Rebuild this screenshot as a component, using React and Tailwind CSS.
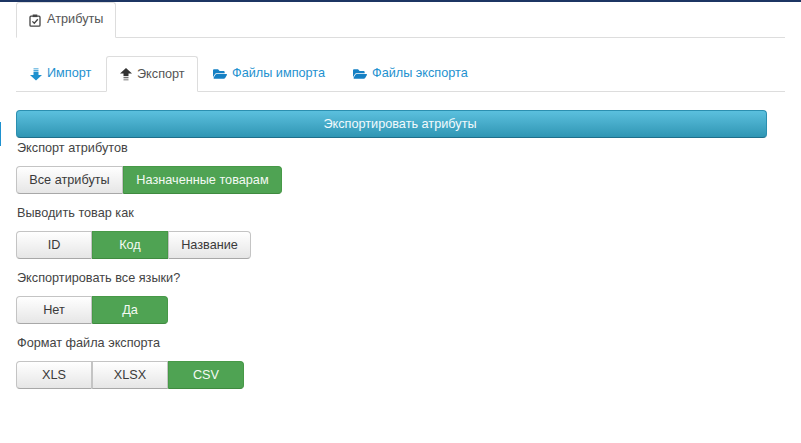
import { FaFolderOpen } from 'react-icons/fa';

const ArrowDownIcon = () => (
    <svg width="12" height="13" viewBox="0 0 12 13" className="text-[#1e91cf]" fill="currentColor">
        <rect x="3.5" y="0" width="5" height="1.5" opacity="0.55" />
        <rect x="3.5" y="2" width="5" height="1.5" opacity="0.8" />
        <path d="M3.5 4H8.5V7H12L6 12.5L0 7H3.5Z" />
    </svg>
);

const ArrowUpIcon = () => (
    <svg width="12" height="13" viewBox="0 0 12 13" className="text-[#333]" fill="currentColor">
        <path d="M6 0L12 5.5H8.5V8H3.5V5.5H0Z" />
        <rect x="3.5" y="8.8" width="5" height="1.5" opacity="0.7" />
        <rect x="3.5" y="11" width="5" height="1.5" opacity="0.45" />
    </svg>
);

const ClipboardIcon = () => (
    <svg width="12" height="13" viewBox="0 0 12 13" fill="none" stroke="#444" strokeWidth="1.3">
        <rect x="1" y="2.2" width="10" height="10" rx="1" />
        <rect x="3.7" y="0.5" width="4.6" height="2.6" fill="#444" stroke="none" />
        <path d="M3.4 7.4L5.3 9.3L8.8 5.3" />
    </svg>
);

const Segment = ({ options, active, widths }) => (
    <div className="flex h-7">
        {options.map((option, i) => (
            <div
                key={option}
                style={{ width: widths[i] }}
                className={`flex items-center justify-center border pt-px text-[12.7px] ${i === 0 ? 'rounded-l-[4px]' : ''} ${i === options.length - 1 ? 'rounded-r-[4px]' : ''} ${
                    option === active
                        ? 'border-[#479947] border-b-[#3f8a3f] bg-[#4fa353] text-[#f4faf4]'
                        : 'border-[#c4c4c4] border-b-[#a8a8a8] bg-gradient-to-b from-white to-[#e6e6e6] text-[#3a3a3a]'
                }`}
            >
                {option}
            </div>
        ))}
    </div>
);

const Field = ({ label, className = '', children }) => (
    <div className={className}>
        <div className="h-[15px] pl-px pt-px text-[12.7px] leading-[14px] text-[#444]">{label}</div>
        <div className="mt-[11px]">{children}</div>
    </div>
);

const App = () => {
    return (
        <div className="relative h-[443px] w-[801px] overflow-hidden border-t-2 border-[#1c3563] bg-white font-['Liberation_Sans',Arial,sans-serif]">
            {/* Marque bleue au bord gauche */}
            <div className="absolute left-0 top-[120px] h-6 w-px bg-[#1e91cf]" />

            <div className="px-4">
                {/* Onglet principal */}
                <div className="flex h-9 border-b border-[#dddddd]">
                    <div className="-mb-px flex h-9 w-[100px] items-center gap-[6px] rounded-t-[3px] border border-b-white border-[#dddddd] bg-white pl-3 text-[12.7px] text-[#555]">
                        <ClipboardIcon />
                        Атрибуты
                    </div>
                </div>

                {/* Onglets secondaires */}
                <div className="mt-[18px] flex h-9 items-stretch border-b border-[#dddddd] text-[12.7px] text-[#1e91cf]">
                    <div className="flex w-[90px] items-center gap-[5px] pl-3.5 pt-px">
                        <ArrowDownIcon />
                        Импорт
                    </div>
                    <div className="-mb-px flex w-[92px] items-center gap-[5px] rounded-t-[3px] border border-b-white border-[#dddddd] bg-white pl-[13px] pt-px text-[#555]">
                        <ArrowUpIcon />
                        Экспорт
                    </div>
                    <div className="flex w-[155px] items-center gap-[5px] pl-[15px] pt-px">
                        <FaFolderOpen className="size-[14px] text-[#1580c4]" />
                        Файлы импорта
                    </div>
                    <div className="flex items-center gap-[5px] pt-px">
                        <FaFolderOpen className="size-[14px] text-[#1580c4]" />
                        Файлы экспорта
                    </div>
                </div>

                {/* Bouton principal */}
                <div className="mt-[18px] flex h-7 w-[751px] items-center justify-center rounded-[4px] border border-[#2b8fb0] border-b-[#1f6f8b] bg-gradient-to-b from-[#5bc0de] to-[#2f96b4] pl-[17px] pt-px text-[12.7px] text-[#f2fafd]">
                    Экспортировать атрибуты
                </div>

                <Field label="Экспорт атрибутов" className="mt-[2px]">
                    <Segment options={['Все атрибуты', 'Назначенные товарам']} active="Назначенные товарам" widths={[107, 159]} />
                </Field>
                <Field label="Выводить товар как" className="mt-[11px]">
                    <Segment options={['ID', 'Код', 'Название']} active="Код" widths={[76, 76, 83]} />
                </Field>
                <Field label="Экспортировать все языки?" className="mt-[11px]">
                    <Segment options={['Нет', 'Да']} active="Да" widths={[76, 76]} />
                </Field>
                <Field label="Формат файла экспорта" className="mt-[11px]">
                    <Segment options={['XLS', 'XLSX', 'CSV']} active="CSV" widths={[76, 76, 76]} />
                </Field>
            </div>
        </div>
    );
};

export default App;
